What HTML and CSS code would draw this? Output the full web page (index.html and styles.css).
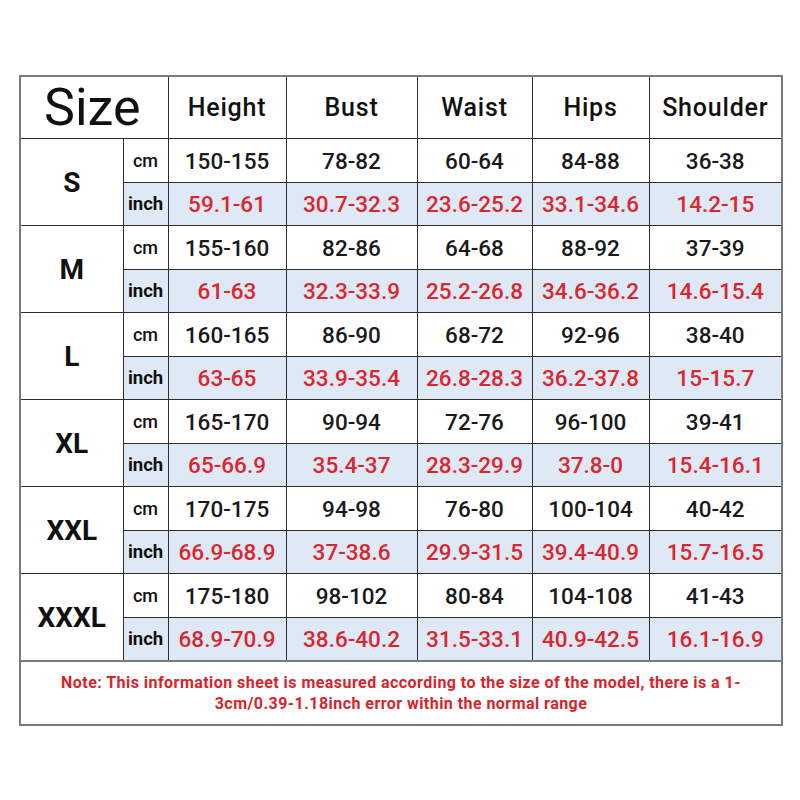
FILE: index.html
```html
<!DOCTYPE html>
<html>
<head>
<meta charset="utf-8">
<link rel="stylesheet" href="styles.css">
</head>
<body>
<table class="chart">
  <colgroup>
    <col class="c-size"><col class="c-unit"><col class="c-h"><col class="c-b"><col class="c-w"><col class="c-hp"><col class="c-s">
  </colgroup>
  <tr class="head">
    <th colspan="2" class="size-title">Size</th>
    <th>Height</th><th>Bust</th><th>Waist</th><th>Hips</th><th>Shoulder</th>
  </tr>
  <tr class="cm"><td rowspan="2" class="label">S</td><td class="unit">cm</td><td>150-155</td><td>78-82</td><td>60-64</td><td>84-88</td><td>36-38</td></tr>
  <tr class="inch"><td class="unit">inch</td><td>59.1-61</td><td>30.7-32.3</td><td>23.6-25.2</td><td>33.1-34.6</td><td>14.2-15</td></tr>
  <tr class="cm"><td rowspan="2" class="label">M</td><td class="unit">cm</td><td>155-160</td><td>82-86</td><td>64-68</td><td>88-92</td><td>37-39</td></tr>
  <tr class="inch"><td class="unit">inch</td><td>61-63</td><td>32.3-33.9</td><td>25.2-26.8</td><td>34.6-36.2</td><td>14.6-15.4</td></tr>
  <tr class="cm"><td rowspan="2" class="label">L</td><td class="unit">cm</td><td>160-165</td><td>86-90</td><td>68-72</td><td>92-96</td><td>38-40</td></tr>
  <tr class="inch"><td class="unit">inch</td><td>63-65</td><td>33.9-35.4</td><td>26.8-28.3</td><td>36.2-37.8</td><td>15-15.7</td></tr>
  <tr class="cm"><td rowspan="2" class="label">XL</td><td class="unit">cm</td><td>165-170</td><td>90-94</td><td>72-76</td><td>96-100</td><td>39-41</td></tr>
  <tr class="inch"><td class="unit">inch</td><td>65-66.9</td><td>35.4-37</td><td>28.3-29.9</td><td>37.8-0</td><td>15.4-16.1</td></tr>
  <tr class="cm"><td rowspan="2" class="label">XXL</td><td class="unit">cm</td><td>170-175</td><td>94-98</td><td>76-80</td><td>100-104</td><td>40-42</td></tr>
  <tr class="inch"><td class="unit">inch</td><td>66.9-68.9</td><td>37-38.6</td><td>29.9-31.5</td><td>39.4-40.9</td><td>15.7-16.5</td></tr>
  <tr class="cm"><td rowspan="2" class="label">XXXL</td><td class="unit">cm</td><td>175-180</td><td>98-102</td><td>80-84</td><td>104-108</td><td>41-43</td></tr>
  <tr class="inch"><td class="unit">inch</td><td>68.9-70.9</td><td>38.6-40.2</td><td>31.5-33.1</td><td>40.9-42.5</td><td>16.1-16.9</td></tr>
  <tr class="note-row"><td colspan="7" class="note">Note: This information sheet is measured according to the size of the model, there is a 1-<br>3cm/0.39-1.18inch error within the normal range</td></tr>
</table>
</body>
</html>
```

FILE: styles.css
```css
html, body {
  margin: 0;
  padding: 0;
  background: #ffffff;
}

body {
  font-family: "Roboto", "Liberation Sans", sans-serif;
  color: #111;
}

.chart {
  margin: 75px 0 0 19px;
  border-collapse: collapse;
  table-layout: fixed;
  width: 762px;
  border: 2px solid #7a7a7a;
}

.c-size { width: 103px; }
.c-unit { width: 45px; }
.c-h { width: 118px; }
.c-b { width: 131px; }
.c-w { width: 115px; }
.c-hp { width: 117px; }
.c-s { width: 133px; }

.chart th,
.chart td {
  border: 1px solid #2e2e2e;
  padding: 0;
  text-align: center;
  vertical-align: middle;
  white-space: nowrap;
}

.head th {
  height: 60px;
  font-weight: 500;
  font-size: 25px;
  letter-spacing: 0.8px;
  color: #111;
}

.head .size-title {
  font-size: 52px;
  font-weight: 400;
  letter-spacing: 0;
  padding-right: 4px;
}

.cm td {
  height: 43px;
  font-size: 22.5px;
  font-weight: 500;
  color: #1a1a1a;
}

.inch td {
  height: 42px;
  font-size: 22.5px;
  font-weight: 500;
  color: #d9262f;
  background: #dfe9f5;
}

.chart td.label {
  font-size: 28px;
  font-weight: 700;
  color: #111;
  background: #ffffff;
}

.chart td.unit {
  font-size: 18px;
  font-weight: 500;
  color: #111;
}

.inch td.unit {
  font-size: 18.5px;
  font-weight: 700;
}

.note-row td.note {
  height: 62px;
  font-size: 16px;
  font-weight: 700;
  line-height: 21px;
  color: #d8232a;
  letter-spacing: 0.45px;
  white-space: normal;
  border: 2px solid #7a7a7a;
}
```
